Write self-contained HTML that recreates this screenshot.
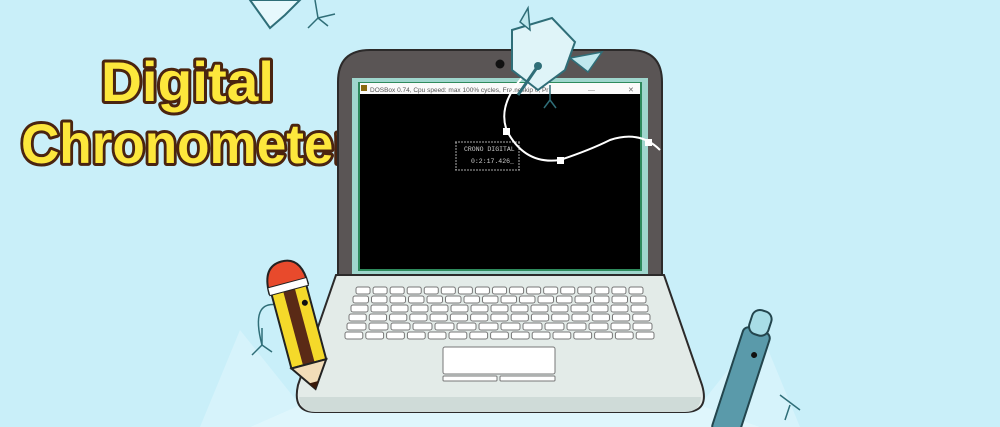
<!DOCTYPE html>
<html><head><style>
html,body{margin:0;padding:0}
body{width:1000px;height:427px;overflow:hidden;background:#c9eff9;position:relative;font-family:"Liberation Sans",sans-serif}
</style></head><body>
<svg width="1000" height="427" viewBox="0 0 1000 427" style="position:absolute;left:0;top:0">
  <polygon points="300,405 700,405 760,427 250,427" fill="#dff6fc"/>
  <polygon points="240,330 300,405 250,427 200,427" fill="#d6f3fb"/>
  <polygon points="760,330 700,405 760,427 800,427" fill="#d6f3fb"/>
  <path d="M250,0 L270,28 L285,15 L300,0 Z" fill="#e6f8fc" stroke="#2f6e78" stroke-width="2"/>
  <path d="M315,0 L318,18 M318,18 L308,28 M318,18 L328,26 M318,18 L335,14" stroke="#2f6e78" stroke-width="1.5" fill="none"/>
  <g font-family="Liberation Sans, sans-serif" font-weight="bold" font-size="56" fill="#fde73c" stroke="#4a2410" stroke-width="6" paint-order="stroke" stroke-linejoin="round">
    <text x="101" y="101" textLength="173" lengthAdjust="spacingAndGlyphs">Digital</text>
    <text x="21" y="163" textLength="333" lengthAdjust="spacingAndGlyphs">Chronometer</text>
  </g>
  <path d="M338,280 L338,82 Q338,50 370,50 L630,50 Q662,50 662,82 L662,280 Z" fill="#5a5555" stroke="#2c2a2a" stroke-width="2"/>
  <circle cx="500" cy="64" r="4.5" fill="#111"/>
  <rect x="352" y="78" width="296" height="196" fill="#9fd6cd"/>
  <rect x="358" y="82" width="284" height="189" fill="#2e8a5c"/>
  <rect x="360" y="83" width="280" height="11" fill="#fafafa"/>
  <rect x="361" y="85" width="6" height="6" fill="#8a6a10"/>
  <text x="370" y="92" font-size="6.5" fill="#555">DOSBox 0.74, Cpu speed: max 100% cycles, Frameskip 0, Pr</text>
  <text x="588" y="92" font-size="7" fill="#888">—</text>
  <text x="628" y="92" font-size="7" fill="#666">✕</text>
  <rect x="360" y="94" width="280" height="175" fill="#000"/>
  <g stroke="#aaa" stroke-width="1" fill="none" stroke-dasharray="2,1">
    <line x1="455" y1="142" x2="520" y2="142"/>
    <line x1="455" y1="170" x2="520" y2="170"/>
    <line x1="456" y1="142" x2="456" y2="170"/>
    <line x1="519" y1="142" x2="519" y2="170"/>
  </g>
  <text x="464" y="151" font-family="Liberation Mono, monospace" font-size="6.5" fill="#ccc">CRONO DIGITAL</text>
  <text x="471" y="163" font-family="Liberation Mono, monospace" font-size="6.5" fill="#ccc">0:2:17.426_</text>
  <path d="M535,65 Q495,100 507,131 Q525,165 560,160 Q590,150 610,140 Q640,130 660,150" stroke="#fff" stroke-width="2" fill="none"/>
  <rect x="503" y="128" width="7" height="7" fill="#fff"/>
  <rect x="557" y="157" width="7" height="7" fill="#fff"/>
  <rect x="645" y="139" width="7" height="7" fill="#fff"/>
  <path d="M512,30 L552,18 L575,42 L565,70 L538,90 L512,70 Z" fill="#dff4f8" stroke="#2f6e78" stroke-width="2"/>
  <path d="M570,58 L602,52 L588,72 Z" fill="#bfe8ee" stroke="#2f6e78" stroke-width="1.5"/>
  <path d="M520,22 L528,8 L530,30 Z" fill="#bfe8ee" stroke="#2f6e78" stroke-width="1.5"/>
  <circle cx="538" cy="66" r="4" fill="#2f6e78"/>
  <line x1="538" y1="66" x2="518" y2="95" stroke="#2f6e78" stroke-width="3"/>
  <path d="M550,85 L550,100 M550,100 L544,108 M550,100 L556,108" stroke="#2f6e78" stroke-width="1.5" fill="none"/>
  <path d="M336,275 L664,275 L702,385 Q710,412 685,412 L315,412 Q292,412 298,385 Z" fill="#e3ebe8" stroke="#2c2a2a" stroke-width="2"/>
  <path d="M299,397 L701,397 Q700,412 685,412 L315,412 Q300,412 299,397 Z" fill="#cfdbd8"/>
  <g fill="#fff" stroke="#777" stroke-width="1"><g id="r1"></g></g>
  <rect x="443" y="347" width="112" height="27" rx="2" fill="#fff" stroke="#777"/>
  <rect x="443" y="376" width="54" height="5" rx="1" fill="#fff" stroke="#777"/>
  <rect x="500" y="376" width="55" height="5" rx="1" fill="#fff" stroke="#777"/>
  <path d="M262,345 L262,328 M262,345 L252,355 M262,345 L272,352" stroke="#2f6e78" stroke-width="1.5" fill="none"/>
  <path d="M278,305 Q250,300 262,345" stroke="#2f6e78" stroke-width="1.5" fill="none"/>
  <g transform="translate(285,275) rotate(-15)">
    <rect x="-18" y="12" width="36" height="80" fill="#f5d92a" stroke="#222" stroke-width="2"/>
    <rect x="-6" y="12" width="12" height="80" fill="#5a2a16"/>
    <path d="M-18,92 L18,92 L0,118 Z" fill="#f2dcb8" stroke="#222" stroke-width="2"/>
    <path d="M-5,111 L5,111 L0,118 Z" fill="#3a1a0a"/>
    <path d="M-20,14 Q-20,-14 0,-14 Q20,-14 20,14 Z" fill="#e84a2c" stroke="#222" stroke-width="2"/>
    <rect x="-20" y="8" width="40" height="8" fill="#fff" stroke="#222" stroke-width="1"/>
    <circle cx="12" cy="32" r="3" fill="#111"/>
  </g>
  <g transform="translate(758,330) rotate(18)">
    <rect x="-14" y="0" width="28" height="110" rx="6" fill="#5a9aaa" stroke="#23454d" stroke-width="2"/>
    <rect x="-10" y="-20" width="20" height="25" rx="8" fill="#a8dde6" stroke="#23454d" stroke-width="2"/>
    <circle cx="4" cy="25" r="3" fill="#111"/>
  </g>
  <path d="M780,395 L800,410 M790,405 L785,420" stroke="#2f6e78" stroke-width="1.5" fill="none"/>
</svg>
<script>
(function(){
 var g=document.getElementById('r1'),ns='http://www.w3.org/2000/svg';
 var rows=[{y:287,x0:355,x1:645,n:17},{y:296,x0:352,x1:648,n:16},{y:305,x0:350,x1:650,n:15},{y:314,x0:348,x1:652,n:15},{y:323,x0:346,x1:654,n:14},{y:332,x0:344,x1:656,n:15}];
 rows.forEach(function(r){var w=(r.x1-r.x0)/r.n;for(var i=0;i<r.n;i++){var e=document.createElementNS(ns,'rect');e.setAttribute('x',r.x0+i*w+1);e.setAttribute('y',r.y);e.setAttribute('width',w-3);e.setAttribute('height',7);e.setAttribute('rx',2);g.appendChild(e);}});
})();
</script>
</body></html>
